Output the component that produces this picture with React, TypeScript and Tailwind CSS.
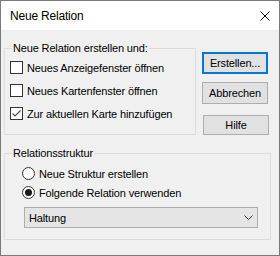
import React from "react";

function CheckRow({ label, checked }: { label: string; checked?: boolean }) {
  return (
    <div className="flex items-center h-[23px] gap-[4px]">
      <span className="w-[13px] h-[13px] border border-[#333333] bg-white flex items-center justify-center shrink-0">
        {checked && (
          <svg width="11" height="11" viewBox="0 0 11 11">
            <path d="M1.5 5.5 L4 8 L9.5 2.5" fill="none" stroke="#4a4a4a" strokeWidth="1.1" />
          </svg>
        )}
      </span>
      <span className="pt-[1px]">{label}</span>
    </div>
  );
}

function RadioRow({ label, checked }: { label: string; checked?: boolean }) {
  return (
    <div className="flex items-center h-[19px] gap-[4px]">
      <span className="w-[13px] h-[13px] rounded-full border border-[#333333] bg-white flex items-center justify-center shrink-0">
        {checked && <span className="w-[7px] h-[7px] rounded-full bg-[#1a1a1a]" />}
      </span>
      <span className="pt-[1px]">{label}</span>
    </div>
  );
}

function Group({ title, className, children }: { title: string; className: string; children: React.ReactNode }) {
  return (
    <div className={"border border-[#dcdcdc] " + className}>
      <div className="-mt-[7px] ml-[7px] px-[1px] w-fit bg-[#f0f0f0] leading-[13px]">{title}</div>
      {children}
    </div>
  );
}

export default function App() {
  return (
    <div
      className="w-[280px] h-[256px] border border-[#7a7a7a] flex flex-col text-[11px] tracking-[-0.15px] text-black bg-[#f0f0f0]"
      style={{ fontFamily: '"Liberation Sans", Arial, sans-serif' }}
    >
      <div className="h-[29px] bg-white flex items-center justify-between pl-[9px] pr-[9px] shrink-0">
        <span className="text-[12px] tracking-[-0.2px] pt-[1px]">Neue Relation</span>
        <svg width="10" height="10" viewBox="0 0 10 10">
          <path d="M0.5 0.5 L9.5 9.5 M9.5 0.5 L0.5 9.5" stroke="#111" strokeWidth="1" />
        </svg>
      </div>
      <div className="flex-1 pl-[3px]">
        <div className="flex">
          <Group title="Neue Relation erstellen und:" className="mt-[18px] w-[192px] h-[87px]">
            <div className="pl-[5px] pt-[1px] flex flex-col">
              <CheckRow label="Neues Anzeigefenster öffnen" />
              <CheckRow label="Neues Kartenfenster öffnen" />
              <CheckRow label="Zur aktuellen Karte hinzufügen" checked />
            </div>
          </Group>
          <div className="ml-[6px] mt-[22px] flex flex-col">
            <button className="w-[66px] h-[22px] border-2 border-[#0078d7] bg-[#e1e1e1] text-[11px] leading-none">
              Erstellen...
            </button>
            <button className="mt-[8px] w-[66px] h-[22px] border border-[#adadad] bg-[#e1e1e1] text-[11px] leading-none">
              Abbrechen
            </button>
            <button className="mt-[11px] ml-[1px] w-[66px] h-[20px] border border-[#adadad] bg-[#e1e1e1] text-[11px] leading-none">
              Hilfe
            </button>
          </div>
        </div>
        <Group title="Relationsstruktur" className="mt-[18px] w-[267px] h-[87px]">
          <div className="pl-[17px] pt-[4px] flex flex-col">
            <RadioRow label="Neue Struktur erstellen" />
            <RadioRow label="Folgende Relation verwenden" checked />
          </div>
          <div className="ml-[19px] mt-[5px] w-[234px] h-[21px] border border-[#adadad] bg-[#e5e5e5] flex items-center justify-between pl-[4px] pr-[4px]">
            <span className="pt-[1px]">Haltung</span>
            <svg width="9" height="5" viewBox="0 0 9 5">
              <path d="M0.5 0.5 L4.5 4.5 L8.5 0.5" fill="none" stroke="#333" strokeWidth="1" />
            </svg>
          </div>
        </Group>
      </div>
    </div>
  );
}
